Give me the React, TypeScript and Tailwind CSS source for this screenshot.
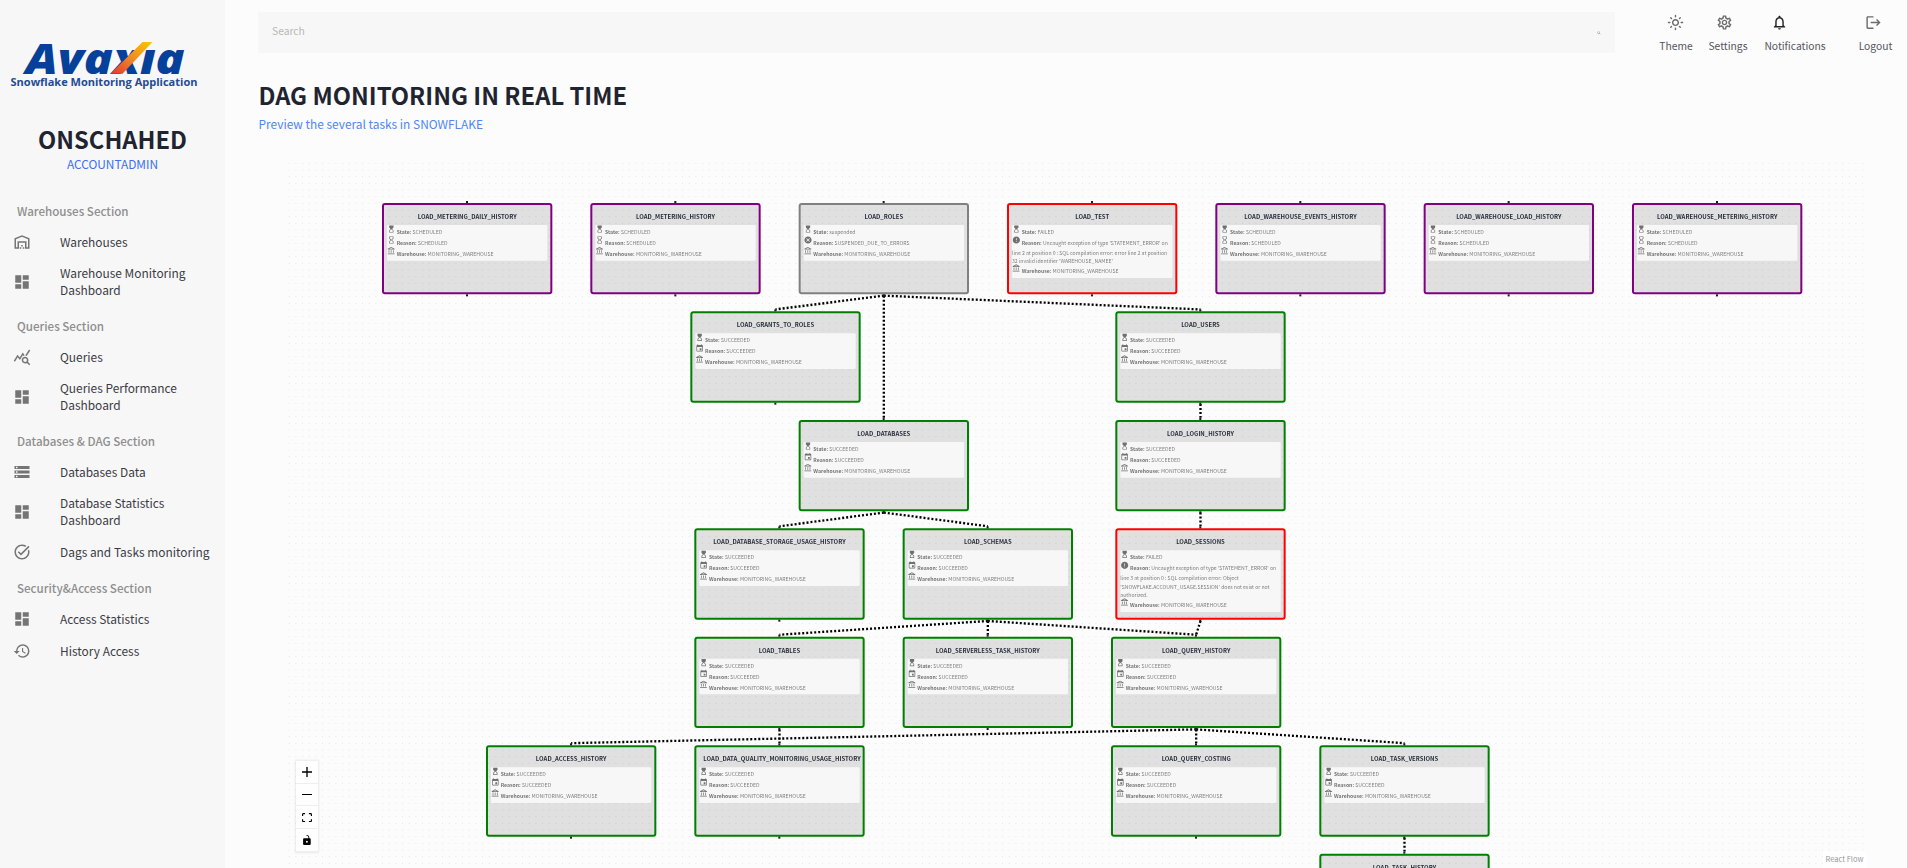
import React from "react";
import type { IconType } from "react-icons";
import {
  MdOutlineWarehouse,
  MdDashboard,
  MdQueryStats,
  MdStorage,
  MdTaskAlt,
  MdHistory,
  MdHourglassTop,
  MdHourglassEmpty,
  MdOutlineAccountBalance,
  MdCancel,
  MdError,
  MdEvent,
  MdOutlineLightMode,
  MdOutlineSettings,
  MdNotificationsNone,
  MdLogout,
  MdSearch,
} from "react-icons/md";

type NavEntry = { icon: IconType; lines: string[] };
type NavSection = { title: string; items: NavEntry[] };

const sections: NavSection[] = [
  {
    title: "Warehouses Section",
    items: [
      { icon: MdOutlineWarehouse, lines: ["Warehouses"] },
      { icon: MdDashboard, lines: ["Warehouse Monitoring", "Dashboard"] },
    ],
  },
  {
    title: "Queries Section",
    items: [
      { icon: MdQueryStats, lines: ["Queries"] },
      { icon: MdDashboard, lines: ["Queries Performance", "Dashboard"] },
    ],
  },
  {
    title: "Databases & DAG Section",
    items: [
      { icon: MdStorage, lines: ["Databases Data"] },
      { icon: MdDashboard, lines: ["Database Statistics", "Dashboard"] },
      { icon: MdTaskAlt, lines: ["Dags and Tasks monitoring"] },
    ],
  },
  {
    title: "Security&Access Section",
    items: [
      { icon: MdDashboard, lines: ["Access Statistics"] },
      { icon: MdHistory, lines: ["History Access"] },
    ],
  },
];

type Status = "scheduled" | "suspended" | "failed" | "succeeded";

type TaskNode = {
  name: string;
  x: number;
  y: number;
  status: Status;
  reason?: string[];
};

const statusStyle: Record<Status, { border: string; icon: IconType; state: string; reason: string }> = {
  scheduled: { border: "border-[#800080]", icon: MdHourglassEmpty, state: "SCHEDULED", reason: "SCHEDULED" },
  suspended: { border: "border-[#808080]", icon: MdCancel, state: "suspended", reason: "SUSPENDED_DUE_TO_ERRORS" },
  failed: { border: "border-[#ff0000]", icon: MdError, state: "FAILED", reason: "" },
  succeeded: { border: "border-[#008000]", icon: MdEvent, state: "SUCCEEDED", reason: "SUCCEEDED" },
};

/* Flow coordinates; the viewport is drawn at one third of this size. */
const NODE_W = 511;
const NODE_H = 274;
const COL = 625;
const ROW = 325.3;

const nodes: TaskNode[] = [
  { name: "LOAD_METERING_DAILY_HISTORY", x: 0, y: 0, status: "scheduled" },
  { name: "LOAD_METERING_HISTORY", x: COL, y: 0, status: "scheduled" },
  { name: "LOAD_ROLES", x: COL * 2, y: 0, status: "suspended" },
  {
    name: "LOAD_TEST",
    x: COL * 3,
    y: 0,
    status: "failed",
    reason: [
      "Uncaught exception of type 'STATEMENT_ERROR' on",
      "line 2 at position 0 : SQL compilation error: error line 2 at position",
      "32 invalid identifier 'WAREHOUSE_NAMEE'",
    ],
  },
  { name: "LOAD_WAREHOUSE_EVENTS_HISTORY", x: COL * 4, y: 0, status: "scheduled" },
  { name: "LOAD_WAREHOUSE_LOAD_HISTORY", x: COL * 5, y: 0, status: "scheduled" },
  { name: "LOAD_WAREHOUSE_METERING_HISTORY", x: COL * 6, y: 0, status: "scheduled" },
  { name: "LOAD_GRANTS_TO_ROLES", x: 925, y: ROW, status: "succeeded" },
  { name: "LOAD_USERS", x: 2200, y: ROW, status: "succeeded" },
  { name: "LOAD_DATABASES", x: COL * 2, y: ROW * 2, status: "succeeded" },
  { name: "LOAD_LOGIN_HISTORY", x: 2200, y: ROW * 2, status: "succeeded" },
  { name: "LOAD_DATABASE_STORAGE_USAGE_HISTORY", x: 937, y: ROW * 3, status: "succeeded" },
  { name: "LOAD_SCHEMAS", x: 1562, y: ROW * 3, status: "succeeded" },
  {
    name: "LOAD_SESSIONS",
    x: 2200,
    y: ROW * 3,
    status: "failed",
    reason: [
      "Uncaught exception of type 'STATEMENT_ERROR' on",
      "line 3 at position 0 : SQL compilation error: Object",
      "'SNOWFLAKE.ACCOUNT_USAGE.SESSION' does not exist or not",
      "authorized.",
    ],
  },
  { name: "LOAD_TABLES", x: 937, y: ROW * 4, status: "succeeded" },
  { name: "LOAD_SERVERLESS_TASK_HISTORY", x: 1562, y: ROW * 4, status: "succeeded" },
  { name: "LOAD_QUERY_HISTORY", x: 2187, y: ROW * 4, status: "succeeded" },
  { name: "LOAD_ACCESS_HISTORY", x: 312, y: ROW * 5, status: "succeeded" },
  { name: "LOAD_DATA_QUALITY_MONITORING_USAGE_HISTORY", x: 937, y: ROW * 5, status: "succeeded" },
  { name: "LOAD_QUERY_COSTING", x: 2187, y: ROW * 5, status: "succeeded" },
  { name: "LOAD_TASK_VERSIONS", x: 2812, y: ROW * 5, status: "succeeded" },
  { name: "LOAD_TASK_HISTORY", x: 2812, y: ROW * 6, status: "succeeded" },
];

const edges: [string, string][] = [
  ["LOAD_ROLES", "LOAD_GRANTS_TO_ROLES"],
  ["LOAD_ROLES", "LOAD_DATABASES"],
  ["LOAD_ROLES", "LOAD_USERS"],
  ["LOAD_USERS", "LOAD_LOGIN_HISTORY"],
  ["LOAD_LOGIN_HISTORY", "LOAD_SESSIONS"],
  ["LOAD_DATABASES", "LOAD_DATABASE_STORAGE_USAGE_HISTORY"],
  ["LOAD_DATABASES", "LOAD_SCHEMAS"],
  ["LOAD_SCHEMAS", "LOAD_TABLES"],
  ["LOAD_SCHEMAS", "LOAD_SERVERLESS_TASK_HISTORY"],
  ["LOAD_SCHEMAS", "LOAD_QUERY_HISTORY"],
  ["LOAD_SESSIONS", "LOAD_QUERY_HISTORY"],
  ["LOAD_TABLES", "LOAD_DATA_QUALITY_MONITORING_USAGE_HISTORY"],
  ["LOAD_QUERY_HISTORY", "LOAD_ACCESS_HISTORY"],
  ["LOAD_QUERY_HISTORY", "LOAD_QUERY_COSTING"],
  ["LOAD_QUERY_HISTORY", "LOAD_TASK_VERSIONS"],
  ["LOAD_TASK_VERSIONS", "LOAD_TASK_HISTORY"],
];

function Logo() {
  return (
    <svg className="block h-[56px] w-[200px] overflow-visible" viewBox="0 0 200 56" role="img" aria-label="Avaxia">
      <defs>
        <linearGradient id="swoosh" x1="0" y1="1" x2="1" y2="0">
          <stop offset="0" stopColor="#e5352f" />
          <stop offset="0.5" stopColor="#f08a24" />
          <stop offset="1" stopColor="#fcc900" />
        </linearGradient>
      </defs>
      <text
        x="25.5"
        y="37.5"
        fill="#05409a"
        fontFamily="'Open Sans'"
        fontWeight="800"
        fontStyle="italic"
        fontSize="42"
        textLength="159"
        lengthAdjust="spacingAndGlyphs"
      >
        Avaxıa
      </text>
      <path d="M110.5 37.8 L142.5 6 H152.5 L122.5 37.8 Z" fill="url(#swoosh)" />
      <text
        x="10.5"
        y="50"
        fill="#1f4c94"
        fontFamily="'Open Sans'"
        fontWeight="700"
        fontSize="11.3"
        textLength="187"
        lengthAdjust="spacingAndGlyphs"
      >
        Snowflake Monitoring Application
      </text>
    </svg>
  );
}

function Sidebar() {
  return (
    <aside className="flex h-full w-[225px] shrink-0 flex-col bg-[#f7f7f7] pt-9">
      <Logo />
      <div className="mt-[32.5px] text-center text-[23.7px] leading-7 font-bold text-[#1f2430]">ONSCHAHED</div>
      <div className="mt-[1px] text-center text-[11.9px] leading-5 text-[#3d70f2]">ACCOUNTADMIN</div>
      <nav className="mt-[17.5px]">
        {sections.map((section) => (
          <section key={section.title}>
            <h3 className="h-[35px] pt-[11px] pl-[17px] text-[11.6px] leading-[18px] font-medium text-[#8e8e8e]">
              {section.title}
            </h3>
            {section.items.map((item) => {
              const Icon = item.icon;
              const tall = item.lines.length > 1;
              return (
                <a key={item.lines.join(" ")} className={`flex items-center pl-[12.5px] ${tall ? "h-12" : "h-8"}`}>
                  <Icon className="size-[18px] shrink-0 text-[#757575]" />
                  <span
                    className={`ml-[29.5px] text-[11.93px] leading-[17.5px] whitespace-nowrap text-[#3b3b45] ${tall ? "pb-[2px]" : "pb-px"}`}
                  >
                    {item.lines.map((line) => (
                      <span key={line} className="block">
                        {line}
                      </span>
                    ))}
                  </span>
                </a>
              );
            })}
          </section>
        ))}
      </nav>
    </aside>
  );
}

function HeaderAction({
  icon: Icon,
  label,
  tone,
  width,
}: {
  icon: IconType;
  label: string;
  tone: string;
  width: string;
}) {
  return (
    <div className={`flex flex-col items-center ${width}`}>
      <Icon className={`size-[17px] ${tone}`} />
      <span className="mt-[6px] text-[10.3px] leading-[18px] whitespace-nowrap text-[#55555c]">{label}</span>
    </div>
  );
}

function Header() {
  return (
    <header className="flex h-[53px] items-start pt-3 pl-[33px]">
      <div className="flex h-[41px] w-[1357px] items-center justify-between bg-[#f7f7f7] pr-[14px] pl-[14px]">
        <span className="pb-[4px] text-[10.3px] leading-4 text-[#b8b8b8]">Search</span>
        <MdSearch className="size-[4px] text-[#777777]" />
      </div>
      <div className="flex pt-[2px]">
        <HeaderAction icon={MdOutlineLightMode} label="Theme" tone="mr-[2px] text-[#6b6b6b]" width="ml-[43.5px] w-[35px]" />
        <HeaderAction
          icon={MdOutlineSettings}
          label="Settings"
          tone="mr-[8px] text-[#6b6b6b]"
          width="ml-[14.5px] w-[40px]"
        />
        <HeaderAction
          icon={MdNotificationsNone}
          label="Notifications"
          tone="mr-[31px] text-[#222222]"
          width="ml-[16.5px] w-[61px]"
        />
        <HeaderAction icon={MdLogout} label="Logout" tone="mr-[4px] text-[#6b6b6b]" width="ml-[33.5px] w-[33px]" />
      </div>
    </header>
  );
}

function InfoLine({ icon: Icon, label, value }: { icon: IconType; label: string; value: string }) {
  return (
    <div className="flex h-[33px] items-start whitespace-nowrap">
      <Icon className="-mt-[1px] size-[26px] shrink-0 text-[#707070]" />
      <span className="ml-[3px] pt-[8px] text-[15.4px] leading-6">
        <b className="font-bold text-[#757575]">{label}:</b> {value}
      </span>
    </div>
  );
}

function TaskCard({ node }: { node: TaskNode }) {
  const style = statusStyle[node.status];
  const reason = node.reason ?? [style.reason];
  return (
    <div
      className={`absolute h-[274px] w-[511px] rounded-[9px] border-[6px] bg-black/11 ${style.border}`}
      style={{ left: node.x, top: node.y }}
    >
      <div className="absolute -top-[12px] left-[246px] size-[6px] bg-[#1a192b]" />
      <div className="absolute -bottom-[12px] left-[246px] size-[6px] bg-[#1a192b]" />
      <div className="h-[61px] px-[21px] pt-[22px] text-center text-[17.9px] leading-6 font-bold whitespace-nowrap text-[#262d3a]">
        {node.name}
      </div>
      <div className="mx-[9px] -mt-[1px] rounded-[4px] bg-[#f7f7f7] pb-[8px] text-[#808080]">
        <InfoLine icon={MdHourglassTop} label="State" value={style.state} />
        <InfoLine icon={style.icon} label="Reason" value={reason[0]} />
        {reason.slice(1).map((line) => (
          <div key={line} className="h-[26px] text-[15.4px] leading-[32px] whitespace-nowrap">
            {line}
          </div>
        ))}
        <InfoLine icon={MdOutlineAccountBalance} label="Warehouse" value="MONITORING_WAREHOUSE" />
      </div>
    </div>
  );
}

function Edges() {
  const byName = new Map(nodes.map((n) => [n.name, n]));
  return (
    <svg className="absolute top-0 left-0 h-[2300px] w-[4300px] overflow-visible" viewBox="0 0 4300 2300">
      {edges.map(([from, to]) => {
        const a = byName.get(from)!;
        const b = byName.get(to)!;
        return (
          <path
            key={`${from}-${to}`}
            d={`M${a.x + NODE_W / 2} ${a.y + NODE_H + 4} L${b.x + NODE_W / 2} ${b.y - 6}`}
            fill="none"
            stroke="#000000"
            strokeWidth="7"
            strokeDasharray="6"
          />
        );
      })}
    </svg>
  );
}

const controlIcons = [
  { name: "zoom in", box: "0 0 32 32", d: "M32 18.133H18.133V32h-4.266V18.133H0v-4.266h13.867V0h4.266v13.867H32z" },
  { name: "zoom out", box: "0 0 32 5", d: "M0 0h32v4.2H0z" },
  {
    name: "fit view",
    box: "0 0 32 30",
    d: "M3.692 4.63c0-.53.4-.938.939-.938h5.215V0H4.708C2.13 0 0 2.054 0 4.63v5.216h3.692V4.631zM27.354 0h-5.2v3.692h5.17c.53 0 .984.4.984.939v5.215H32V4.631A4.624 4.624 0 0027.354 0zm.954 24.83c0 .532-.4.94-.939.94h-5.215v3.768h5.215c2.577 0 4.631-2.13 4.631-4.707v-5.139h-3.692v5.139zm-23.677.94c-.531 0-.939-.4-.939-.94v-5.138H0v5.139c0 2.577 2.13 4.707 4.708 4.707h5.138V25.77H4.631z",
  },
  {
    name: "toggle interactivity",
    box: "0 0 25 32",
    d: "M21.333 10.667H19.81V7.619C19.81 3.429 16.38 0 12.19 0c-4.114 1.828-1.37 2.133.305 2.438 1.676.305 4.42 2.59 4.42 5.181v3.048H3.047A3.056 3.056 0 000 13.714v15.238A3.056 3.056 0 003.048 32h18.285a3.056 3.056 0 003.048-3.048V13.714a3.056 3.056 0 00-3.048-3.047zM12.19 24.533a3.056 3.056 0 01-3.047-3.047 3.056 3.056 0 013.047-3.048 3.056 3.056 0 013.048 3.048 3.056 3.056 0 01-3.048 3.047z",
  },
];

function Controls() {
  return (
    <div className="absolute top-[601px] left-[10px] flex w-[22px] flex-col shadow-[0_0_2px_1px_rgba(0,0,0,0.08)]">
      {controlIcons.map((icon) => (
        <button
          key={icon.name}
          aria-label={icon.name}
          className="flex h-[22.7px] items-center justify-center border-b border-[#eeeeee] bg-[#fefefe]"
        >
          <svg viewBox={icon.box} className="max-h-[10px] w-[10px] fill-black">
            <path d={icon.d} />
          </svg>
        </button>
      ))}
    </div>
  );
}

function FlowCanvas() {
  return (
    <div className="relative ml-[60.5px] min-h-0 w-[1581px] flex-1 overflow-hidden">
      <svg className="absolute inset-0 h-full w-full">
        <defs>
          <pattern id="dots" x="-0.1" y="0" width="6.6667" height="6.6667" patternUnits="userSpaceOnUse">
            <circle cx="3.33" cy="3.33" r="0.4" fill="#81818a" fillOpacity="0.42" />
          </pattern>
        </defs>
        <rect width="100%" height="100%" fill="url(#dots)" />
      </svg>
      <div className="absolute top-[43.2px] left-[96.8px] origin-top-left scale-[0.33333]">
        <Edges />
        {nodes.map((node) => (
          <TaskCard key={node.name} node={node} />
        ))}
      </div>
      <Controls />
      <div className="absolute right-0 bottom-0 bg-[#fefefe] px-[3px] pt-[1px] pb-[2px] text-[7.5px] leading-[14px] text-[#999999]">
        React Flow
      </div>
    </div>
  );
}

export default function App() {
  return (
    <div className="flex h-[868px] w-[1907px] overflow-hidden bg-[#fcfcfc] font-['Noto_Sans_CJK_SC','Noto_Sans',sans-serif]">
      <Sidebar />
      <main className="flex min-w-0 flex-1 flex-col">
        <Header />
        <div className="h-[107px] pt-[27.5px] pl-[33.5px]">
          <h1 className="text-[23.75px] leading-7 font-bold text-[#1f2430]">DAG MONITORING IN REAL TIME</h1>
          <p className="mt-[5.5px] text-[11.92px] leading-5 text-[#4c87f5]">Preview the several tasks in SNOWFLAKE</p>
        </div>
        <FlowCanvas />
      </main>
    </div>
  );
}
